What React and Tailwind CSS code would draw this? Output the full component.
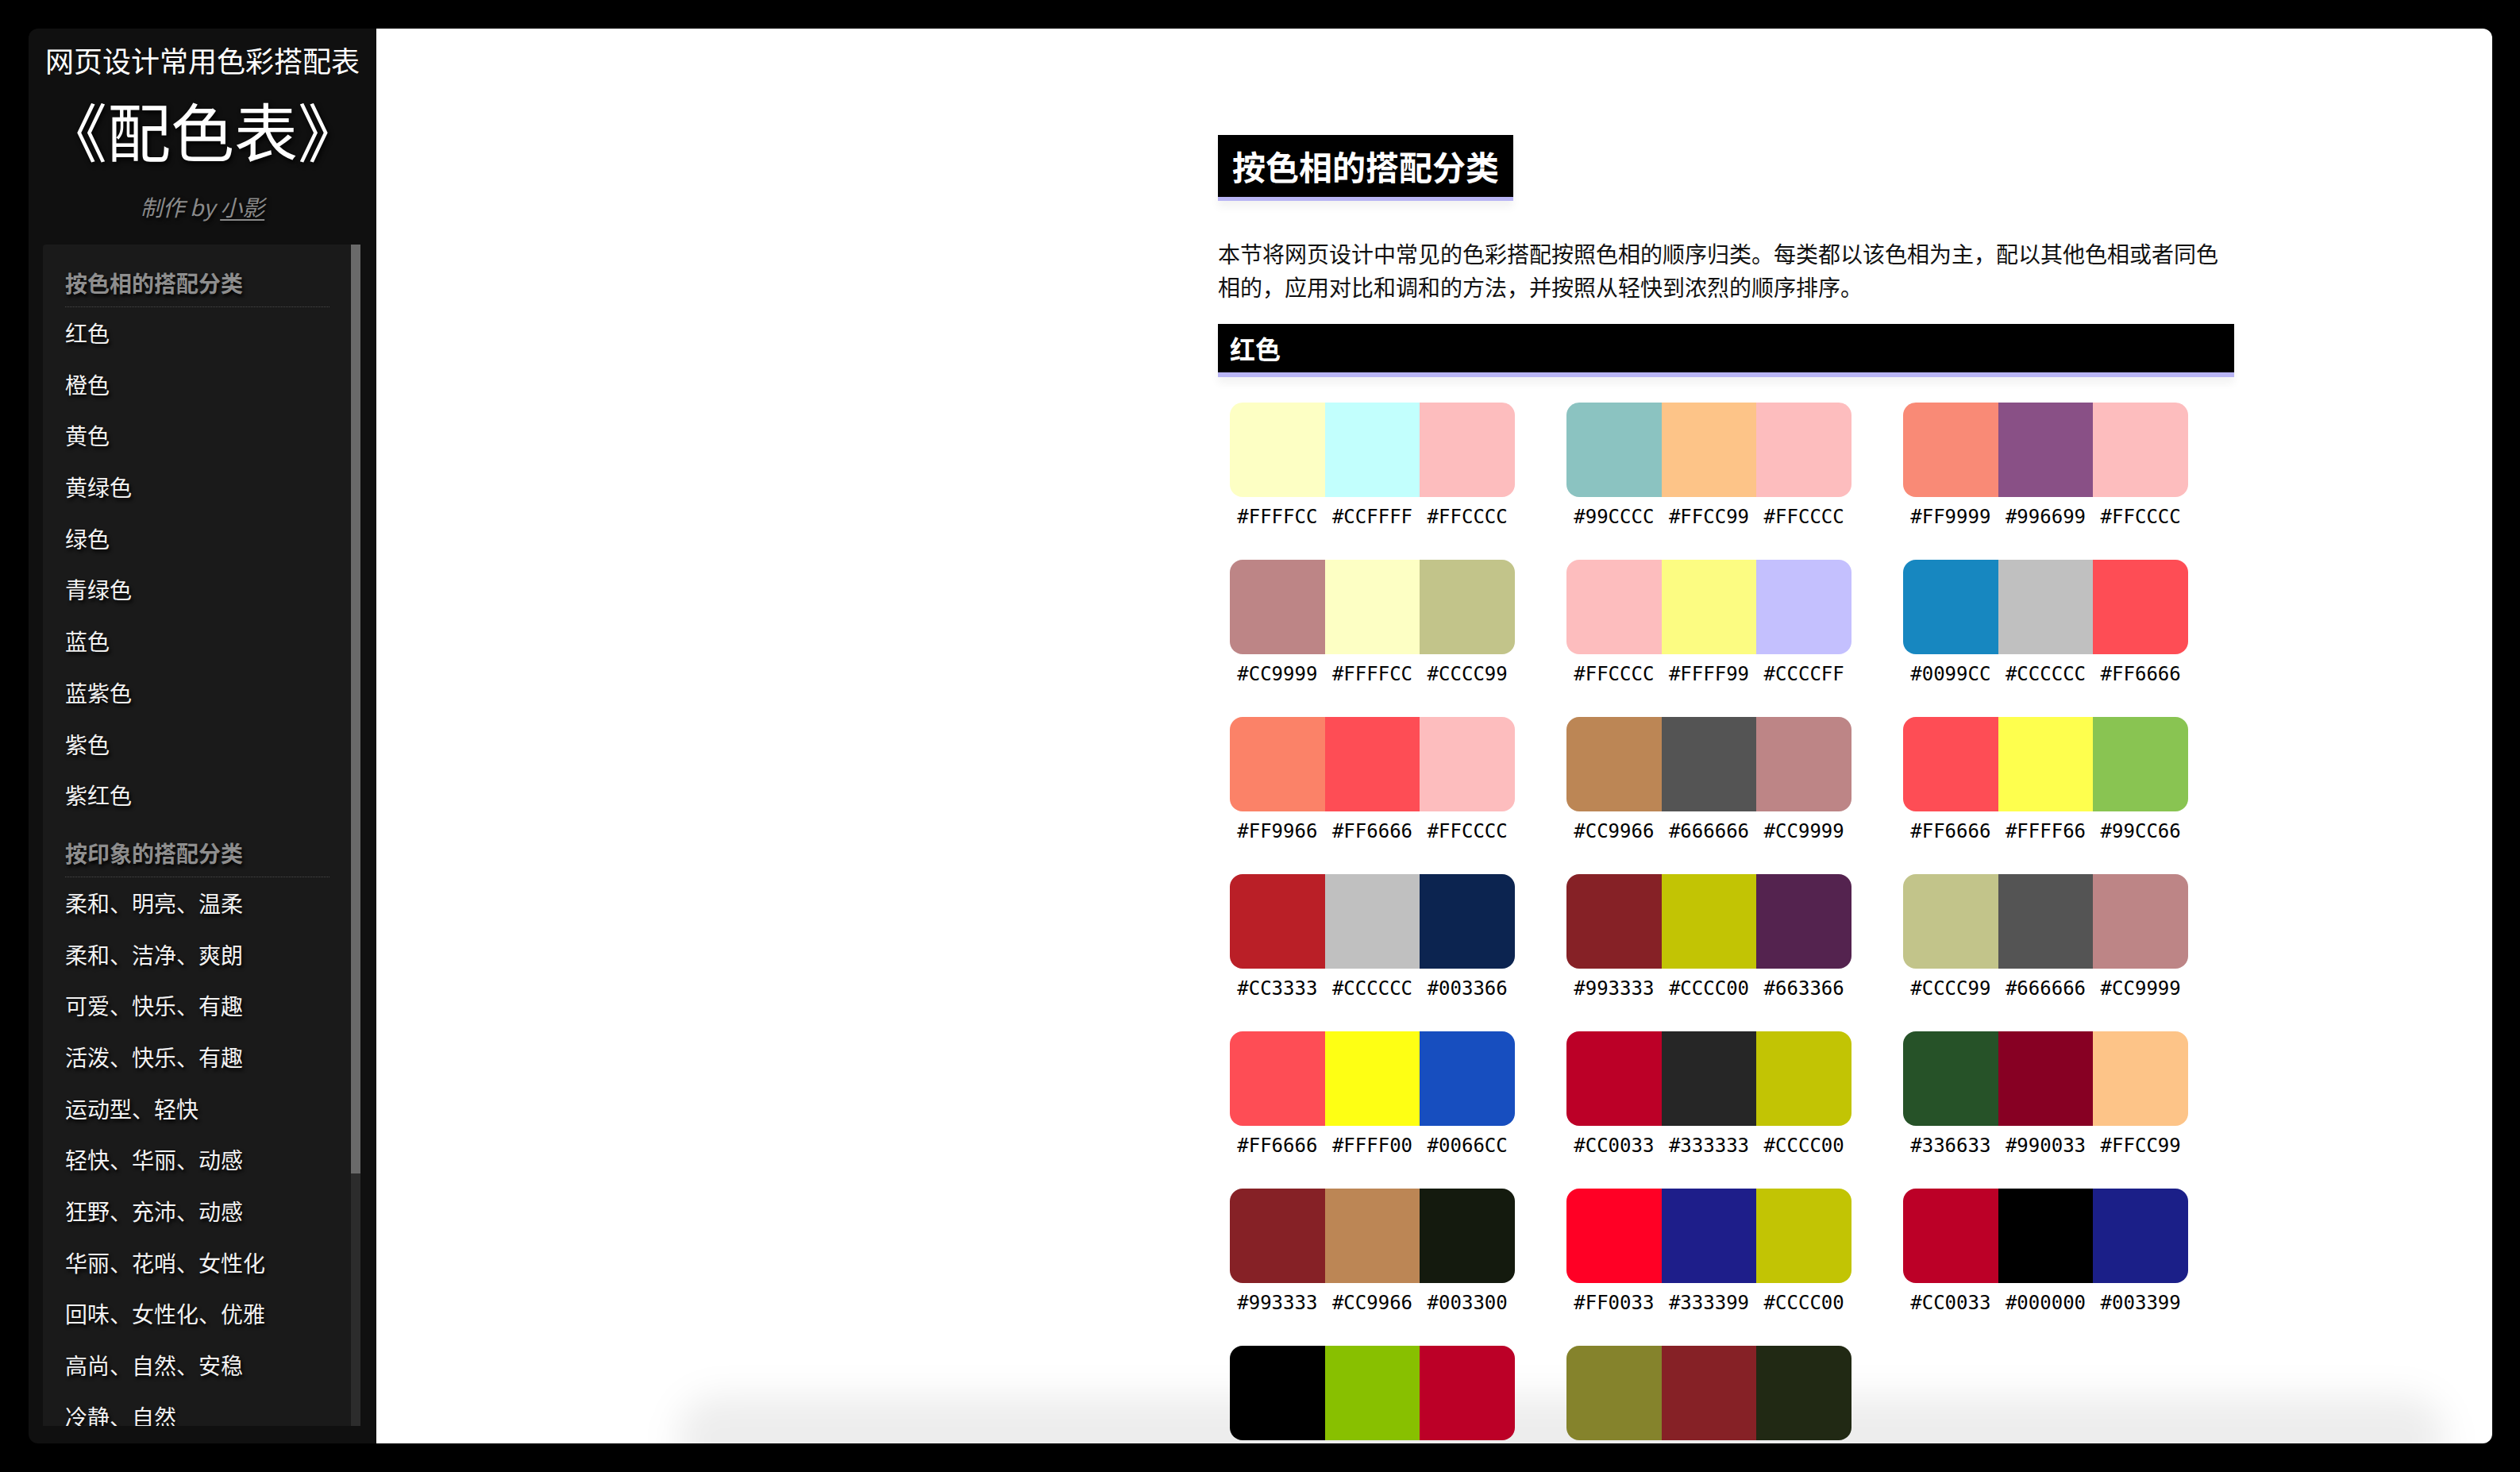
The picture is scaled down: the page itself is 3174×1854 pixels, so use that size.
import React from "react";

const hueItems = ["红色", "橙色", "黄色", "黄绿色", "绿色", "青绿色", "蓝色", "蓝紫色", "紫色", "紫红色"];
const moodItems = [
  "柔和、明亮、温柔",
  "柔和、洁净、爽朗",
  "可爱、快乐、有趣",
  "活泼、快乐、有趣",
  "运动型、轻快",
  "轻快、华丽、动感",
  "狂野、充沛、动感",
  "华丽、花哨、女性化",
  "回味、女性化、优雅",
  "高尚、自然、安稳",
  "冷静、自然",
];

const palettes = [
  [["#FDFFC4", "#FFFFCC"], ["#C2FFFD", "#CCFFFF"], ["#FDBDBE", "#FFCCCC"]],
  [["#8BC3C1", "#99CCCC"], ["#FDC488", "#FFCC99"], ["#FDBDBE", "#FFCCCC"]],
  [["#F98A76", "#FF9999"], ["#895086", "#996699"], ["#FDBDBE", "#FFCCCC"]],
  [["#BD8586", "#CC9999"], ["#FDFFC4", "#FFFFCC"], ["#C2C48A", "#CCCC99"]],
  [["#FDBDBE", "#FFCCCC"], ["#FCFC82", "#FFFF99"], ["#C4C0FE", "#CCCCFF"]],
  [["#1787C0", "#0099CC"], ["#C0C0C0", "#CCCCCC"], ["#FE4D55", "#FF6666"]],
  [["#FB8268", "#FF9966"], ["#FE4D55", "#FF6666"], ["#FDBDBE", "#FFCCCC"]],
  [["#BC8655", "#CC9966"], ["#545454", "#666666"], ["#BD8586", "#CC9999"]],
  [["#FE4D55", "#FF6666"], ["#FEFF4E", "#FFFF66"], ["#89C452", "#99CC66"]],
  [["#BA1F27", "#CC3333"], ["#C0C0C0", "#CCCCCC"], ["#0C2450", "#003366"]],
  [["#862126", "#993333"], ["#C2C404", "#CCCC00"], ["#54234F", "#663366"]],
  [["#C2C48A", "#CCCC99"], ["#545454", "#666666"], ["#BD8586", "#CC9999"]],
  [["#FE4D55", "#FF6666"], ["#FEFF14", "#FFFF00"], ["#174EBF", "#0066CC"]],
  [["#BC0027", "#CC0033"], ["#262626", "#333333"], ["#C2C404", "#CCCC00"]],
  [["#265228", "#336633"], ["#870023", "#990033"], ["#FDC488", "#FFCC99"]],
  [["#862126", "#993333"], ["#BC8655", "#CC9966"], ["#141A0E", "#003300"]],
  [["#FF0025", "#FF0033"], ["#1E1E8A", "#333399"], ["#C2C404", "#CCCC00"]],
  [["#BC0027", "#CC0033"], ["#000000", "#000000"], ["#1B1F88", "#003399"]],
  [["#000000", "#000000"], ["#88C000", "#99CC00"], ["#BC0027", "#CC0033"]],
  [["#85832C", "#999933"], ["#862126", "#993333"], ["#212914", "#333300"]],
];

const cjk = "font-['Noto_Sans_CJK_SC','Noto_Sans',sans-serif]";

function NavHeading({ children, first }) {
  return (
    <div
      className={`${first ? "pt-[28px]" : "pt-[20px]"} pb-[10px] border-b border-dotted border-[#4a4a4a] text-[28px] leading-[40px] font-bold text-[#8e8e8e] whitespace-nowrap [text-shadow:2px_3px_4px_#000]`}
    >
      {children}
    </div>
  );
}

function NavItem({ children }) {
  return (
    <div className="h-[64.7px] leading-[64.7px] text-[28px] text-[#f2f2f2] whitespace-nowrap [text-shadow:2px_3px_4px_#000]">
      {children}
    </div>
  );
}

function Card({ colors }) {
  return (
    <div className="h-[198px]">
      <div className="flex h-[119px] rounded-[16px] overflow-hidden">
        {colors.map(([bg], i) => (
          <div key={i} className="flex-1" style={{ backgroundColor: bg }} />
        ))}
      </div>
      <div className="flex mt-[12px] font-['DejaVu_Sans_Mono','Liberation_Mono',monospace] text-[24px] leading-[26px] text-black">
        {colors.map(([, label], i) => (
          <div key={i} className="flex-1 text-center">
            {label}
          </div>
        ))}
      </div>
    </div>
  );
}

export default function App() {
  return (
    <div className={`w-[3174px] h-[1854px] bg-black pt-[36px] pl-[36px] pr-[35px] pb-[36px] ${cjk}`}>
      <div className="flex h-[1782px] rounded-[12px] overflow-hidden">
        {/* Sidebar */}
        <div className="w-[438px] shrink-0 bg-[#101010] flex flex-col items-center">
          <div className="mt-[17px] text-[36px] leading-[44px] text-white whitespace-nowrap">
            网页设计常用色彩搭配表
          </div>
          <div className="mt-[17px] text-[80px] leading-[96px] text-white whitespace-nowrap [text-shadow:2px_3px_6px_#000]">
            《配色表》
          </div>
          <div className="mt-[32px] text-[28px] leading-[36px] italic text-[#8a8a8a] whitespace-nowrap [text-shadow:2px_3px_5px_#000]">
            制作 by <span className="underline underline-offset-[4px]">小影</span>
          </div>
          <div className="relative self-start ml-[18px] mt-[30px] w-[400px] h-[1488px] bg-[#1a1a1a] overflow-hidden rounded-tl-[4px]">
            <div className="pl-[28px] pr-[39px]">
              <NavHeading first>按色相的搭配分类</NavHeading>
              {hueItems.map((t) => (
                <NavItem key={t}>{t}</NavItem>
              ))}
              <NavHeading>按印象的搭配分类</NavHeading>
              {moodItems.map((t) => (
                <NavItem key={t}>{t}</NavItem>
              ))}
            </div>
            <div className="absolute right-0 top-0 bottom-0 w-[12px] bg-[#2c2c2c]">
              <div className="h-[1170px] bg-[#6a6a6a]" />
            </div>
          </div>
        </div>

        {/* Main */}
        <div className="relative flex-1 bg-white overflow-hidden">
          <div className="pointer-events-none absolute left-[380px] right-[60px] bottom-[-50px] h-[110px] rounded-[50px] bg-black/[0.07] blur-[22px]" />
          <div className="relative pl-[1060px] pt-[134px]">
            <div className="w-[1280px]">
              <div className="inline-block bg-black border-b-[5px] border-[#B8B4F4] px-[18px] text-[42px] leading-[78px] font-bold text-white whitespace-nowrap shadow-[0_8px_10px_rgba(0,0,0,0.05)]">
                按色相的搭配分类
              </div>
              <p className="mt-[45px] text-[28px] leading-[42px] text-[#111]">
                本节将网页设计中常见的色彩搭配按照色相的顺序归类。每类都以该色相为主，配以其他色相或者同色相的，应用对比和调和的方法，并按照从轻快到浓烈的顺序排序。
              </p>
              <div className="mt-[26px] h-[67px] bg-black border-b-[6px] border-[#B8B4F4] pl-[15px] text-[32px] leading-[61px] font-bold text-white shadow-[0_8px_10px_rgba(0,0,0,0.05)]">
                红色
              </div>
              <div className="mt-[32px] pl-[15px] grid grid-cols-[359px_359px_359px] gap-x-[65px]">
                {palettes.map((p, i) => (
                  <Card key={i} colors={p} />
                ))}
              </div>
            </div>
          </div>
        </div>
      </div>
    </div>
  );
}
